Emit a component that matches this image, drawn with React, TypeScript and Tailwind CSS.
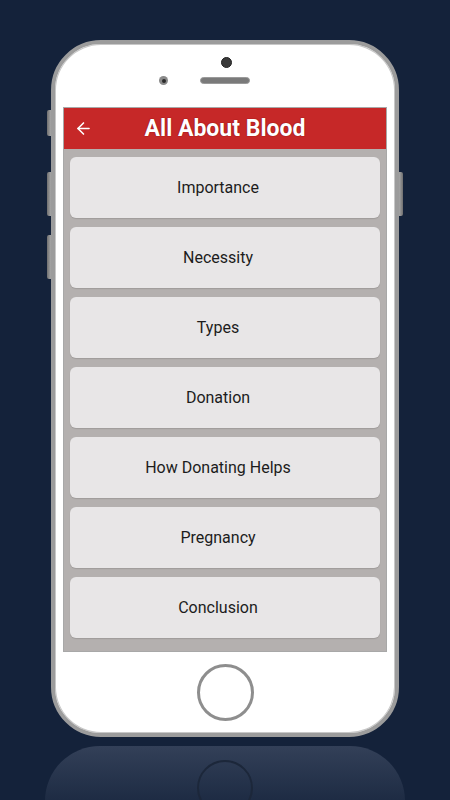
import React from 'react';
import { ArrowLeft } from 'lucide-react';

const topics = ['Importance', 'Necessity', 'Types', 'Donation', 'How Donating Helps', 'Pregnancy', 'Conclusion'];

const App: React.FC = () => {
    return (
        <div
            className="relative w-[450px] h-[800px] overflow-hidden bg-[#14223a] flex flex-col items-center"
            style={{ fontFamily: 'Roboto, "Liberation Sans", sans-serif' }}
        >
            {/* Phone */}
            <div className="relative mt-[40px] w-[348px] h-[697px] shrink-0 rounded-[50px] border-[4px] border-[#9c9c9c] bg-white flex flex-col shadow-[inset_0_0_0_1px_#c8c8c8]">
                {/* side buttons */}
                <div className="absolute left-[-8px] top-[66px] w-[4px] h-[26px] rounded-l-[2px] bg-gradient-to-r from-[#6f6f6f] to-[#a8a8a8]" />
                <div className="absolute left-[-8px] top-[128px] w-[4px] h-[44px] rounded-l-[2px] bg-gradient-to-r from-[#6f6f6f] to-[#a8a8a8]" />
                <div className="absolute left-[-8px] top-[191px] w-[4px] h-[44px] rounded-l-[2px] bg-gradient-to-r from-[#6f6f6f] to-[#a8a8a8]" />
                <div className="absolute right-[-8px] top-[128px] w-[4px] h-[44px] rounded-r-[2px] bg-gradient-to-l from-[#6f6f6f] to-[#a8a8a8]" />

                {/* Top bezel */}
                <div className="relative h-[63px] shrink-0">
                    <div className="absolute left-[166px] top-[13px] w-[11px] h-[11px] rounded-full bg-[#3a3a3a] border border-[#222]" />
                    <div className="absolute left-[104px] top-[32px] w-[9px] h-[9px] rounded-full bg-[#8a8a8a] flex items-center justify-center">
                        <div className="w-[4px] h-[4px] rounded-full bg-[#2a2a2a]" />
                    </div>
                    <div className="absolute left-[145px] top-[33px] w-[50px] h-[7px] rounded-full bg-[#7a7a7a] border border-[#9a9a9a]" />
                </div>

                {/* Screen */}
                <div className="mx-[8px] h-[545px] shrink-0 border border-[#a8a8a8] flex flex-col bg-[#b4b0af]">
                    <div className="h-[41px] shrink-0 bg-[#c62828] relative flex items-center justify-center">
                        <ArrowLeft className="absolute left-[10px] text-white" size={19} strokeWidth={2} />
                        <span
                            className="text-white font-bold text-[23px] pt-[1px]"
                            style={{ textShadow: '0 0 1px #8b1010, 0 0 1px #8b1010' }}
                        >
                            All About Blood
                        </span>
                    </div>
                    <div className="flex flex-col gap-[9px] px-[6px] pt-[8px]">
                        {topics.map((t) => (
                            <div
                                key={t}
                                className="h-[61px] rounded-[6px] bg-[#e8e6e7] flex items-center justify-center pr-[14px] pt-[1px] text-[16px] text-[#1c1c1c] shadow-[0_1px_1px_rgba(0,0,0,0.12)]"
                            >
                                {t}
                            </div>
                        ))}
                    </div>
                </div>

                {/* Home button */}
                <div className="flex-1 flex items-center justify-center">
                    <div className="w-[57px] h-[57px] rounded-full border-[3px] border-[#8e8e8e] bg-white" />
                </div>
            </div>

            {/* Reflection */}
            <div className="relative mt-[9px] w-[360px] h-[80px] shrink-0 rounded-t-[55px] bg-gradient-to-b from-[#334058] to-[#14223a] flex justify-center">
                <div className="mt-[14px] w-[56px] h-[56px] rounded-full border-[2px] border-[#1c273a]" />
            </div>
        </div>
    );
};

export default App;
